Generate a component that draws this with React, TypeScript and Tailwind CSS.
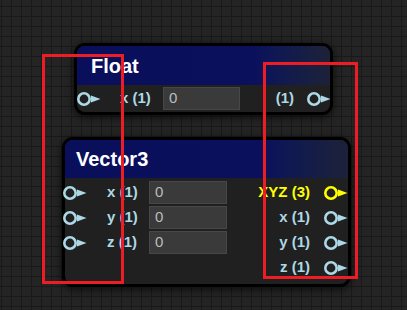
const font = { fontFamily: '"Liberation Sans", Arial, sans-serif' }

function Port({ color = '#add8e6' }: { color?: string }) {
  return (
    <svg width="24" height="14" viewBox="0 0 24 14" className="shrink-0">
      <circle cx="7" cy="7" r="5.7" fill="none" stroke={color} strokeWidth="2.6" />
      <polygon points="14,3.6 23.5,7 14,10.4" fill={color} />
    </svg>
  )
}

function NumberField({ width }: { width: string }) {
  return (
    <div className={`${width} h-[23px] bg-[#3a3a3a] border border-[#474747] flex items-center px-[5px] text-[15px] text-[#bdbdbd]`}>
      0
    </div>
  )
}

function Header({ title, className }: { title: string; className: string }) {
  return (
    <div
      className={`${className} flex items-center rounded-t-[8px] bg-gradient-to-r from-[#0a0f5c] via-[#0b105c] via-70% to-[#1d2138] text-white font-bold text-[20px]`}
    >
      {title}
    </div>
  )
}

export default function App() {
  const inputs = ['x (1)', 'y (1)', 'z (1)']
  const outputs = ['x (1)', 'y (1)', 'z (1)']

  return (
    <div
      className="relative w-[407px] h-[310px] overflow-hidden bg-[#242424] bg-[linear-gradient(to_right,#191919_1px,transparent_1px),linear-gradient(to_bottom,#191919_1px,transparent_1px)] bg-[length:10px_10px] bg-[position:1px_6px]"
      style={font}
    >
      {/* Float node */}
      <div className="absolute left-[74px] top-[43px] w-[259px] border-[3px] border-black rounded-[11px] bg-[#1f201f] shadow-[0_2px_8px_rgba(0,0,0,0.7)]">
        <Header title="Float" className="h-[39px] pl-[14px]" />
        <div className="flex items-center h-[25px] mt-[1px] mb-[1px]">
          <Port />
          <span className="ml-[19px] w-[43px] text-[15px] font-bold text-[#add8e6]">x (1)</span>
          <NumberField width="w-[77px]" />
          <div className="flex-1" />
          <span className="text-[15px] font-bold text-[#add8e6]">(1)</span>
          <div className="ml-[13px] -mr-[1px]">
            <Port />
          </div>
        </div>
      </div>

      {/* Vector3 node */}
      <div className="absolute left-[62px] top-[137px] w-[289px] border-[3px] border-black rounded-[11px] bg-[#1f201f] shadow-[0_2px_8px_rgba(0,0,0,0.7)]">
        <Header title="Vector3" className="h-[38px] pl-[11px]" />
        <div className="flex justify-between pt-[2px] pb-[4px]">
          <div className="flex flex-col">
            {inputs.map(label => (
              <div key={label} className="flex items-center h-[25px] -ml-[2px]">
                <Port />
                <span className="ml-[20px] w-[42px] text-[15px] font-bold text-[#add8e6]">{label}</span>
                <NumberField width="w-[78px]" />
              </div>
            ))}
          </div>
          <div className="flex flex-col items-end">
            <div className="flex items-center h-[25px]">
              <span className="text-[15px] font-bold text-[#ffff00]">XYZ (3)</span>
              <div className="ml-[14px]">
                <Port color="#ffff00" />
              </div>
            </div>
            {outputs.map(label => (
              <div key={label} className="flex items-center h-[25px]">
                <span className="text-[15px] font-bold text-[#add8e6]">{label}</span>
                <div className="ml-[14px]">
                  <Port />
                </div>
              </div>
            ))}
          </div>
        </div>
      </div>

      {/* annotation boxes */}
      <div className="absolute left-[42px] top-[54px] w-[82px] h-[230px] border-[3px] border-[#ee1c24]" />
      <div className="absolute left-[263px] top-[62px] w-[95px] h-[217px] border-[3px] border-[#ee1c24]" />
    </div>
  )
}
